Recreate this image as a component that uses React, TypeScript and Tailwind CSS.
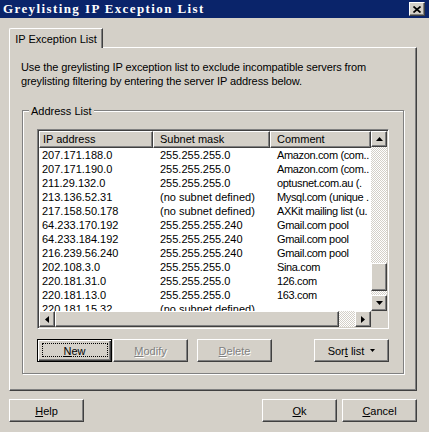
const raised =
  "border border-t-white border-l-white border-r-[#404040] border-b-[#404040] shadow-[inset_-1px_-1px_0_#808080]";
const track =
  "bg-[image:repeating-conic-gradient(#ffffff_0_25%,#d4d0c8_0_50%)] bg-[length:2px_2px]";

// comments are shown as the list control clips them at the scrollbar
const rows: [string, string, string][] = [
  ["207.171.188.0", "255.255.255.0", "Amazon.com (com.."],
  ["207.171.190.0", "255.255.255.0", "Amazon.com (com.."],
  ["211.29.132.0", "255.255.255.0", "optusnet.com.au (."],
  ["213.136.52.31", "(no subnet defined)", "Mysql.com (unique ."],
  ["217.158.50.178", "(no subnet defined)", "AXKit mailing list (u."],
  ["64.233.170.192", "255.255.255.240", "Gmail.com pool"],
  ["64.233.184.192", "255.255.255.240", "Gmail.com pool"],
  ["216.239.56.240", "255.255.255.240", "Gmail.com pool"],
  ["202.108.3.0", "255.255.255.0", "Sina.com"],
  ["220.181.31.0", "255.255.255.0", "126.com"],
  ["220.181.13.0", "255.255.255.0", "163.com"],
  ["220.181.15.32", "(no subnet defined)", ""],
];

function Arrow({ dir }: { dir: "up" | "down" | "left" | "right" }) {
  const vertical = dir === "up" || dir === "down";
  const points = {
    up: "3.5,0 7,4 0,4",
    down: "0,0 7,0 3.5,4",
    left: "4,0 4,7 0,3.5",
    right: "0,0 4,3.5 0,7",
  }[dir];
  return (
    <div className={`flex h-[16px] w-[16px] shrink-0 items-center justify-center bg-[#d4d0c8] ${raised}`}>
      <svg width={vertical ? 7 : 4} height={vertical ? 4 : 7} viewBox={vertical ? "0 0 7 4" : "0 0 4 7"}>
        <polygon points={points} fill="black" />
      </svg>
    </div>
  );
}

function Button({
  children,
  disabled,
  isDefault,
}: {
  children: React.ReactNode;
  disabled?: boolean;
  isDefault?: boolean;
}) {
  const frame = isDefault
    ? "border border-black shadow-[inset_1px_1px_0_#fff,inset_-1px_-1px_0_#404040,inset_-2px_-2px_0_#808080]"
    : raised;
  return (
    <div
      className={`relative flex h-[23px] w-[75px] shrink-0 items-center justify-center bg-[#d4d0c8] ${frame} ${
        disabled ? "text-[#808080] [text-shadow:1px_1px_0_#fff]" : "text-black"
      }`}
    >
      {isDefault && <span className="absolute top-[3px] right-[3px] bottom-[4px] left-[4px] border border-dotted border-black" />}
      {children}
    </div>
  );
}

export default function App() {
  return (
    <div className="h-[432px] w-[429px] overflow-hidden bg-[#d4d0c8] font-['Liberation_Sans',Arial,sans-serif] text-[11px] leading-[14px] text-black">
      {/* title bar */}
      <div className="flex h-[18px] items-center bg-[#0a246a] pr-[4px] pl-[3px]">
        <span className="font-['Liberation_Serif',serif] text-[13px] leading-[18px] font-bold tracking-[1.4px] text-white">
          Greylisting IP Exception List
        </span>
        <div className={`ml-auto flex h-[14px] w-[16px] items-center justify-center bg-[#d4d0c8] ${raised}`}>
          <svg width="8" height="7" viewBox="0 0 8 7">
            <path d="M0.5 0.5L7.5 6.5M7.5 0.5L0.5 6.5" stroke="black" strokeWidth="1.7" />
          </svg>
        </div>
      </div>

      <div className="pt-[10px] pl-[9px]">
        <div className="relative z-10 -mb-px flex h-[20px] w-[94px] items-center justify-center rounded-tl-[2px] border-t border-r border-l border-t-white border-r-[#404040] border-l-white bg-[#d4d0c8] shadow-[inset_-1px_0_0_#808080]">
          IP Exception List
        </div>
        <div className="h-[344px] w-[408px] border border-t-white border-r-[#404040] border-b-[#404040] border-l-white pt-[12px] pl-[11px] shadow-[inset_-1px_-1px_0_#808080]">
          <p className="tracking-[-0.1px]">
            Use the greylisting IP exception list to exclude incompatible servers from
            <br />
            greylisting filtering by entering the server IP address below.
          </p>

          {/* Address List group */}
          <div className="relative mt-[22px] ml-px h-[264px] w-[382px] border border-[#808080] pt-[18px] pl-[14px] shadow-[1px_1px_0_#fff,inset_1px_1px_0_#fff]">
            <span className="absolute -top-[7px] left-[6px] bg-[#d4d0c8] px-[2px]">Address List</span>

            <div className="flex h-[200px] w-[352px] flex-col border border-t-[#808080] border-r-white border-b-white border-l-[#808080] p-px shadow-[inset_1px_1px_0_#404040,inset_-1px_-1px_0_#d4d0c8]">
              <div className="flex h-[180px]">
                <div className="w-[332px] overflow-hidden">
                  <div className="flex h-[17px] bg-[#d4d0c8]">
                    <div className={`w-[114px] shrink-0 pl-[3px] leading-[15px] ${raised}`}>IP address</div>
                    <div className={`w-[117px] shrink-0 pl-[6px] leading-[15px] ${raised}`}>Subnet mask</div>
                    <div className={`w-[101px] shrink-0 pl-[6px] leading-[15px] ${raised}`}>Comment</div>
                  </div>
                  <div className="h-[163px] overflow-hidden bg-white">
                    {rows.map((r, i) => (
                      <div key={i} className="flex h-[14px] whitespace-nowrap">
                        <div className="w-[114px] shrink-0 overflow-hidden pl-[3px]">{r[0]}</div>
                        <div className="w-[117px] shrink-0 overflow-hidden pl-[7px]">{r[1]}</div>
                        <div className="w-[101px] shrink-0 overflow-hidden pl-[7px] tracking-[-0.35px]">{r[2]}</div>
                      </div>
                    ))}
                  </div>
                </div>
                <div className="flex w-[16px] flex-col">
                  <Arrow dir="up" />
                  <div className={`h-[116px] ${track}`} />
                  <div className={`h-[28px] bg-[#d4d0c8] ${raised}`} />
                  <div className={`h-[4px] ${track}`} />
                  <Arrow dir="down" />
                </div>
              </div>
              <div className="flex h-[16px]">
                <Arrow dir="left" />
                <div className={`w-[284px] bg-[#d4d0c8] ${raised}`} />
                <div className={`w-[16px] ${track}`} />
                <Arrow dir="right" />
                <div className="w-[16px] bg-[#d4d0c8]" />
              </div>
            </div>

            <div className="mt-[10px] flex w-[352px]">
              <Button isDefault>
                <span className="underline">N</span>ew
              </Button>
              <div className="ml-px">
                <Button disabled>
                  <span className="underline">M</span>odify
                </Button>
              </div>
              <div className="ml-[9px]">
                <Button disabled>
                  <span className="underline">D</span>elete
                </Button>
              </div>
              <div className="ml-auto">
                <Button>
                  <span>
                    Sor<span className="underline">t</span> list
                  </span>
                  <svg className="ml-[6px]" width="5" height="3" viewBox="0 0 5 3">
                    <polygon points="0,0 5,0 2.5,3" fill="black" />
                  </svg>
                </Button>
              </div>
            </div>
          </div>
        </div>
      </div>

      <div className="mt-[8px] flex pr-[12px] pl-[9px]">
        <Button>
          <span className="underline">H</span>elp
        </Button>
        <div className="ml-auto">
          <Button>
            <span className="underline">O</span>k
          </Button>
        </div>
        <div className="ml-[5px]">
          <Button>
            <span className="underline">C</span>ancel
          </Button>
        </div>
      </div>
    </div>
  );
}
